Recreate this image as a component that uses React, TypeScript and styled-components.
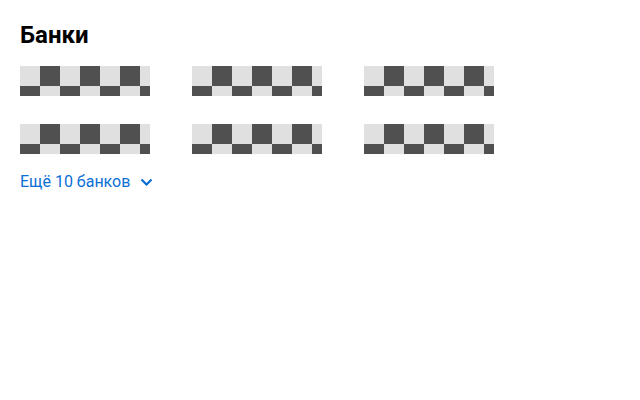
import styled, { createGlobalStyle } from 'styled-components';

const GlobalStyle = createGlobalStyle`
  body {
    margin: 0;
    background: #fff;
    font-family: Roboto, "Liberation Sans", Arial, sans-serif;
  }
`;

const Section = styled.section`
  padding: 20px 20px 0;
  display: flex;
  flex-direction: column;
  align-items: flex-start;
`;

const Title = styled.h2`
  margin: 0;
  font-size: 24px;
  line-height: 30px;
  font-weight: 700;
  color: #000;
`;

const Grid = styled.div`
  margin-top: 16px;
  display: grid;
  grid-template-columns: repeat(3, 130px);
  column-gap: 42px;
  row-gap: 28px;
`;

const BankLogo = styled.div`
  width: 130px;
  height: 30px;
  background: repeating-conic-gradient(#505050 0 25%, #e0e0e0 0 50%) 0 0 / 40px 40px;
`;

const MoreButton = styled.button`
  margin-top: 18px;
  padding: 0;
  border: none;
  background: none;
  display: flex;
  align-items: center;
  gap: 10px;
  font-family: inherit;
  font-size: 16px;
  line-height: 20px;
  color: #0a6fd6;
  cursor: pointer;
`;

const banks = ['1', '2', '3', '4', '5', '6'];

const App = () => (
  <>
    <GlobalStyle />
    <Section>
      <Title>Банки</Title>
      <Grid>
        {banks.map((id) => (
          <BankLogo key={id} />
        ))}
      </Grid>
      <MoreButton>
        Ещё 10 банков
        <svg width="13" height="8" viewBox="0 0 13 8" fill="none">
          <path d="M1.5 1.5 6.5 6.5l5-5" stroke="currentColor" strokeWidth="2.2" />
        </svg>
      </MoreButton>
    </Section>
  </>
);

export default App;
